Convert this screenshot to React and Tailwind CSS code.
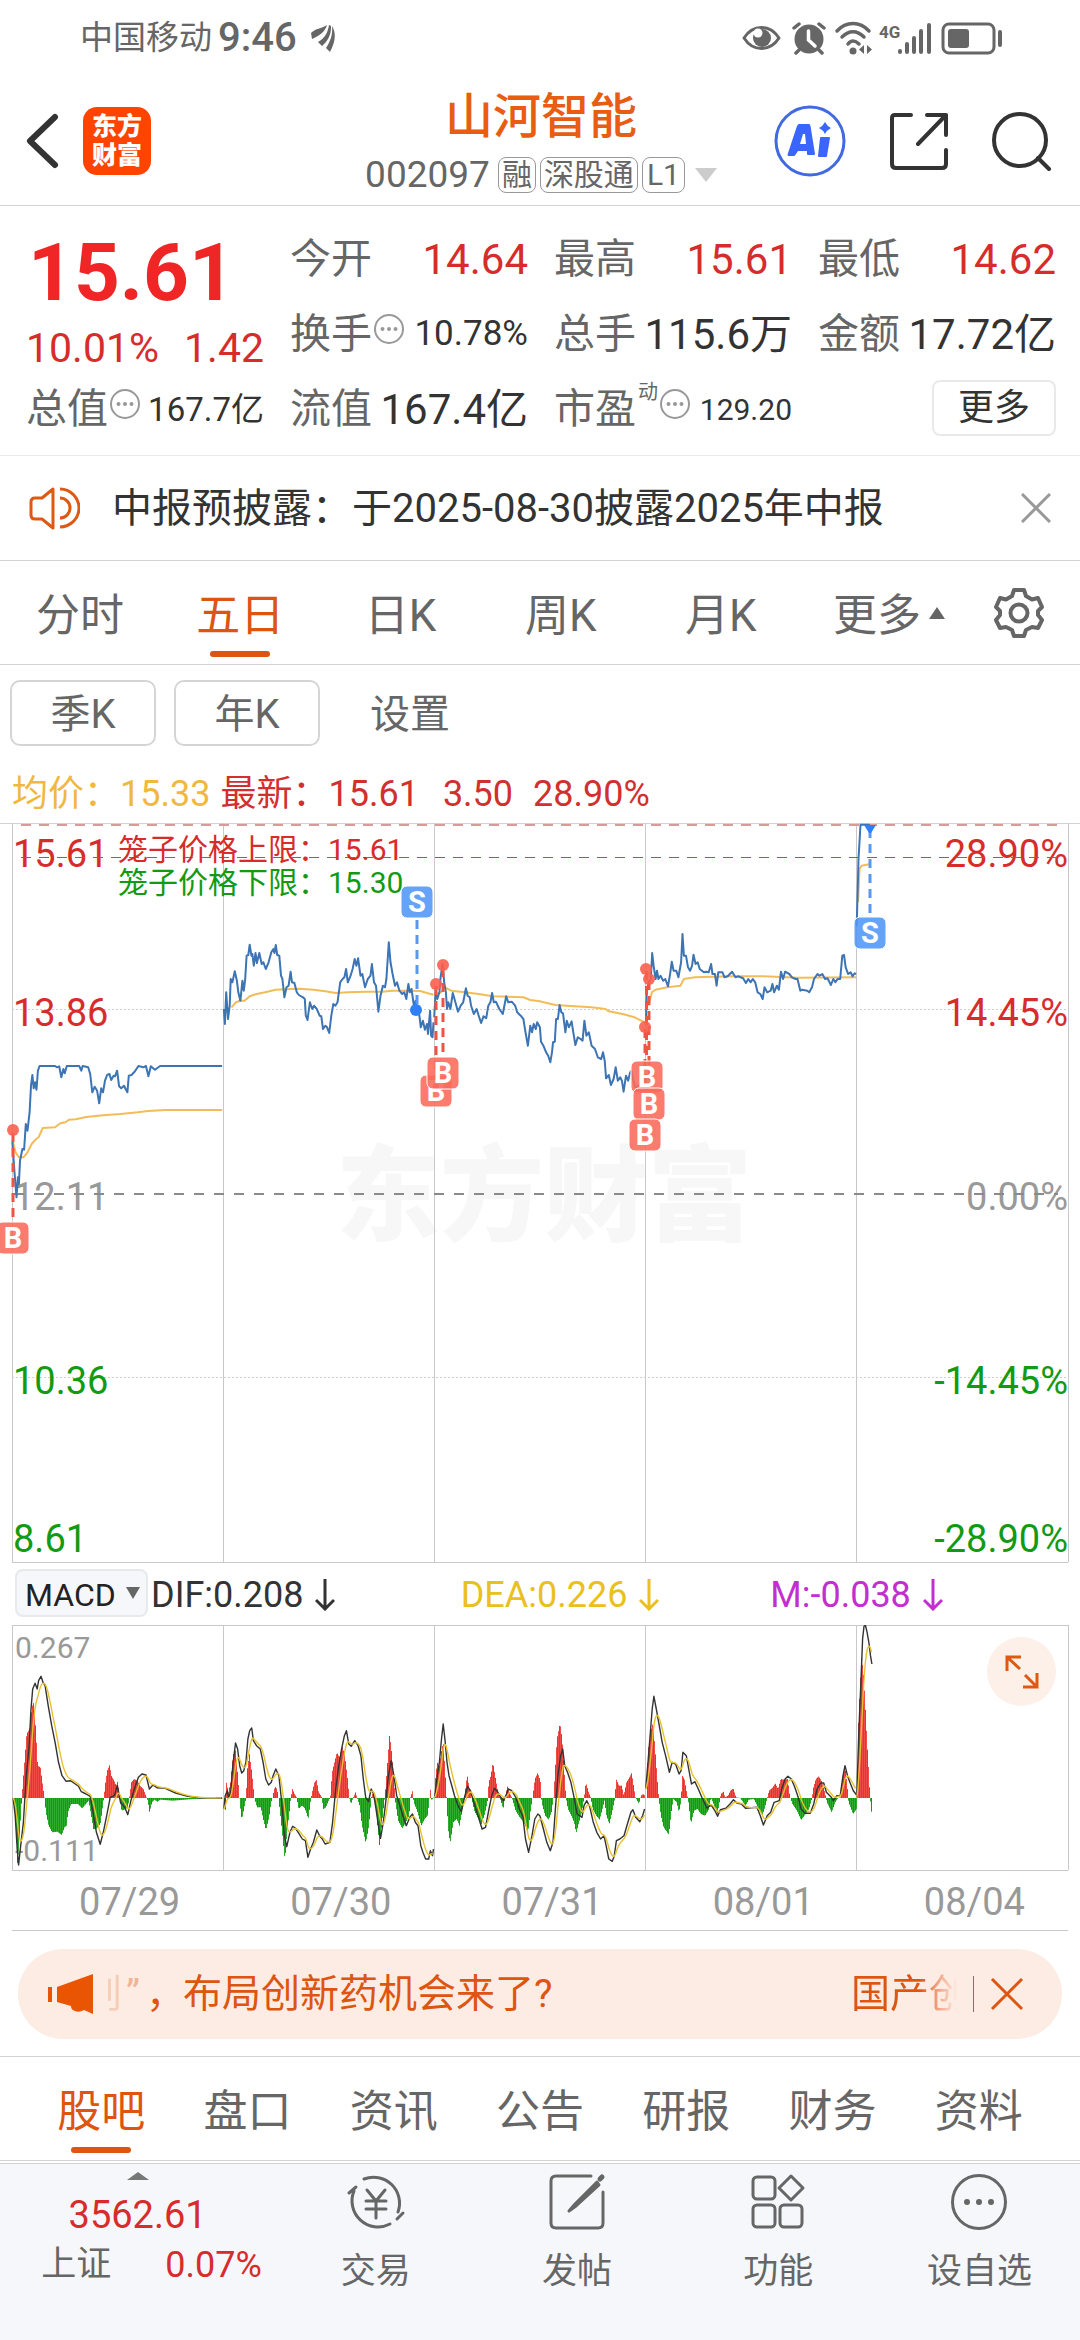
import React from "react";

/* Chart samples: x is in 1/2.904 px, y in 1/3 px, measured from the panel's own origin. */
const SX = 2.904;
const SY = 3;

const parse = (s) => s.trim().split(/\s+/).map((p) => p.split(",").map(Number));

const priceDays = [
  "38,960 36,972 42,1060 48,1135 52,1075 55,1095 58,1025 65,990 70,992 75,915 80,935 86,880 90,800 94,768 98,808 102,790 106,812 110,755 115,741 160,741 165,745 172,742 178,775 184,750 188,763 194,741 230,741 236,755 240,741 256,745 262,765 268,820 275,803 282,815 288,853 294,808 299,820 305,785 311,768 318,765 323,783 330,770 334,772 340,755 346,802 352,808 360,800 366,812 370,820 374,770 382,768 392,757 402,741 416,745 424,741 431,772 438,742 450,752 465,741 645,741",
  "650,570 653,615 657,520 662,600 667,560 670,480 675,490 682,457 688,485 692,520 698,545 704,485 708,515 712,480 716,410 721,408 725,377 730,410 733,405 737,440 742,402 746,432 753,402 760,435 765,430 772,450 780,430 788,400 794,390 797,402 801,378 805,408 811,410 816,470 820,480 826,535 832,505 838,500 844,458 848,490 855,492 862,520 868,528 880,535 885,540 888,590 893,603 900,550 907,570 912,560 920,570 928,590 933,592 938,630 945,620 950,625 956,642 962,590 968,555 974,560 980,550 988,490 995,480 1000,475 1005,450 1010,490 1018,470 1024,450 1030,420 1035,440 1040,418 1047,470 1052,465 1060,505 1068,480 1076,470 1080,435 1086,490 1092,500 1099,578 1105,530 1112,500 1118,505 1122,480 1129,370 1134,430 1140,465 1147,500 1153,490 1160,515 1168,525 1174,520 1180,540 1186,495 1190,520 1195,510 1202,560 1207,545 1211,572 1218,590 1222,625 1228,605 1234,632 1240,615 1243,645 1249,575 1252,650 1256,655 1259,610",
  "1261,595 1265,520 1270,540 1276,520 1279,480 1285,435 1290,490 1295,520 1298,570 1302,550 1308,570 1315,522 1320,540 1330,578 1338,560 1345,550 1353,508 1358,530 1364,535 1368,560 1376,585 1384,570 1390,590 1397,612 1404,592 1412,598 1418,560 1424,550 1429,522 1434,550 1440,548 1450,570 1460,585 1470,532 1476,550 1486,548 1496,560 1502,580 1512,590 1520,600 1526,640 1533,680 1540,620 1545,640 1550,615 1556,630 1560,610 1568,625 1571,668 1578,680 1586,700 1592,710 1598,730 1603,700 1606,670 1611,668 1615,600 1620,600 1625,558 1630,580 1635,583 1642,640 1646,605 1652,625 1660,607 1665,640 1671,678 1678,655 1686,660 1692,665 1697,605 1703,650 1710,640 1718,680 1728,690 1736,715 1746,720 1751,700 1756,725 1760,778 1768,768 1774,798 1782,780 1788,745 1794,785 1801,775 1806,785 1811,818 1818,770 1824,785 1830,760 1834,755 1838,780 1845,805 1856,800 1868,780",
  "1876,600 1878,520 1884,490 1890,480 1894,402 1898,440 1904,480 1908,455 1912,480 1918,470 1926,485 1932,480 1940,502 1946,465 1951,428 1956,455 1964,455 1970,475 1978,430 1982,345 1986,410 1992,410 1998,445 2004,455 2010,440 2014,407 2020,435 2026,430 2032,450 2044,460 2050,458 2058,460 2065,435 2069,465 2076,465 2081,500 2086,460 2098,460 2104,475 2113,472 2126,458 2136,475 2143,472 2158,478 2166,492 2173,480 2180,490 2186,480 2193,490 2200,520 2208,525 2215,540 2220,505 2228,520 2238,515 2243,495 2248,520 2256,500 2262,512 2268,458 2274,480 2280,458 2292,465 2300,475 2310,480 2316,480 2324,515 2330,512 2344,515 2350,520 2358,505 2364,480 2374,465 2380,470 2388,465 2396,480 2403,478 2413,498 2420,480 2426,490 2432,480 2440,480 2446,410 2451,408 2456,445 2463,465 2470,460 2476,472 2482,463 2486,465",
  "2488,322 2493,120 2499,17 2526,17",
];

const avgDays = [
  "38,970 45,1000 55,1015 68,1015 80,1000 92,975 105,960 112,955 124,927 160,925 175,913 190,910 200,902 220,901 250,894 300,889 350,885 400,880 430,876 480,873 645,873",
  "672,565 685,550 697,545 710,545 725,532 745,525 770,520 800,512 830,511 870,509 910,512 945,517 975,522 1010,520 1060,518 1110,518 1140,515 1190,515 1220,516 1240,522 1259,527",
  "1261,527 1280,520 1292,505 1310,515 1350,520 1390,525 1430,532 1520,535 1540,543 1568,547 1588,552 1613,558 1668,562 1718,565 1758,570 1768,577 1808,585 1843,595 1872,610",
  "1883,560 1893,520 1903,512 1938,505 1976,500 1986,480 2018,475 2128,472 2218,472 2318,476 2486,475",
  "2492,250 2496,150 2502,140 2523,136 2526,132",
];

const barDays = [
  "38,747 44,830 50,955 55,870 60,780 62,747 66,690 72,610 76,555 84,540 90,490 95,455 100,500 104,570 108,650 116,655 124,720 128,747 132,790 140,830 150,850 165,848 178,858 186,835 192,830 196,790 205,765 225,765 237,778 248,765 256,755 262,790 270,840 278,840 290,825 296,780 300,747 305,700 310,665 317,648 322,680 330,695 336,710 341,695 345,747 352,785 364,780 370,775 375,740 380,700 388,690 398,695 405,710 415,720 424,745 428,755 433,790 440,760 447,752 456,758 464,752 500,755 560,750 645,748",
  "650,747 653,795 656,700 662,730 668,700 675,620 682,600 688,665 694,747 698,790 701,812 708,775 713,747 717,660 723,615 730,670 737,745 745,775 756,775 763,810 771,843 780,805 786,760 790,747 795,720 800,712 806,735 812,790 818,850 826,935 832,850 838,800 843,747 848,720 854,735 860,745 866,780 875,770 882,775 888,790 894,810 900,760 905,730 912,700 918,693 924,730 932,742 938,780 945,775 953,755 958,745 963,670 970,640 977,610 984,625 992,590 1000,620 1008,690 1013,747 1018,765 1024,747 1031,730 1036,747 1043,770 1050,830 1061,882 1070,830 1077,745 1082,730 1088,760 1095,830 1101,892 1107,830 1112,780 1117,735 1124,640 1130,556 1137,620 1143,700 1147,760 1155,815 1167,838 1177,820 1187,800 1190,747 1197,725 1200,760 1210,785 1222,830 1232,810 1240,800 1245,760 1248,715 1252,755 1258,745",
  "1262,700 1268,640 1275,650 1280,610 1286,578 1292,680 1296,760 1300,840 1306,882 1315,820 1325,810 1333,830 1340,790 1348,745 1352,700 1356,682 1362,720 1368,747 1376,785 1388,810 1397,825 1405,800 1414,760 1418,700 1424,680 1430,640 1438,690 1445,730 1450,745 1460,780 1466,740 1472,712 1480,735 1485,745 1496,785 1508,805 1520,820 1532,850 1540,780 1546,740 1552,690 1560,672 1568,695 1570,745 1574,770 1582,800 1592,812 1600,790 1606,745 1611,660 1616,570 1625,522 1631,570 1638,680 1642,745 1648,780 1658,800 1666,820 1672,852 1680,820 1688,790 1695,745 1700,700 1708,730 1714,745 1720,780 1730,800 1740,812 1748,780 1754,755 1760,800 1768,825 1776,790 1784,750 1788,690 1796,710 1804,710 1810,740 1818,700 1824,690 1833,672 1840,720 1844,745 1854,765 1860,740 1866,735 1872,740",
  "1876,700 1881,600 1888,550 1895,520 1901,600 1908,700 1912,750 1918,800 1926,835 1941,857 1948,790 1954,750 1964,760 1970,790 1976,760 1980,680 1986,690 1992,725 1998,760 2005,825 2014,785 2024,780 2034,795 2046,800 2058,780 2063,745 2071,765 2082,795 2088,760 2092,735 2100,728 2104,745 2113,740 2120,725 2128,718 2136,745 2148,747 2164,770 2173,752 2188,750 2202,780 2212,800 2220,775 2226,750 2232,725 2243,715 2250,703 2258,720 2266,690 2276,692 2286,690 2292,740 2300,765 2313,785 2325,813 2338,795 2348,780 2356,750 2361,715 2368,690 2376,682 2384,695 2394,730 2400,760 2414,790 2424,760 2432,747 2440,745 2444,690 2452,650 2458,700 2463,760 2476,795 2486,780",
  "2488,740 2492,500 2496,420 2500,325 2505,360 2510,440 2516,570 2521,660 2525,745 2528,770 2532,822",
];

const difDays = [
  "38,747 44,800 50,900 54,948 60,890 68,820 76,680 84,600 90,480 95,420 102,403 108,420 112,395 119,382 125,400 131,410 140,470 150,530 160,580 170,640 180,680 192,697 205,695 228,712 236,728 250,735 262,742 270,790 280,850 291,886 300,850 310,800 320,745 332,740 341,710 350,760 362,775 371,797 380,755 390,720 402,685 412,675 424,678 434,720 444,708 456,716 480,718 510,732 545,742 580,746 645,747",
  "650,780 654,740 660,725 664,745 670,730 676,650 684,582 690,600 696,650 702,672 708,665 714,640 720,570 725,545 731,537 736,575 745,590 756,600 764,640 772,690 780,708 788,700 793,680 801,660 810,680 818,760 826,860 833,893 842,850 850,832 858,838 866,850 878,870 887,875 894,925 902,900 910,880 920,843 928,860 936,870 944,885 958,880 966,820 975,720 984,650 992,600 1000,560 1006,545 1013,585 1020,592 1030,575 1040,590 1048,620 1055,690 1062,745 1070,758 1078,720 1085,735 1092,780 1099,830 1105,868 1113,820 1120,760 1128,680 1136,635 1144,680 1152,740 1160,765 1170,800 1180,830 1190,805 1198,795 1206,820 1214,830 1222,890 1228,910 1236,930 1245,930 1250,905 1256,920 1259,900",
  "1262,745 1270,680 1276,640 1282,570 1287,525 1292,570 1298,640 1304,680 1312,710 1320,740 1330,770 1340,788 1350,740 1358,712 1366,725 1376,760 1388,800 1400,840 1410,835 1420,780 1428,740 1436,718 1446,730 1454,745 1462,755 1470,738 1476,720 1486,725 1498,745 1508,780 1518,800 1526,870 1535,910 1545,860 1553,810 1562,795 1568,800 1578,840 1588,880 1598,905 1606,880 1613,780 1620,680 1628,620 1634,600 1640,650 1648,670 1658,700 1666,740 1676,795 1690,805 1696,770 1704,755 1713,775 1723,820 1733,850 1744,870 1754,860 1760,890 1768,930 1778,937 1784,920 1790,875 1800,870 1812,860 1822,825 1832,790 1838,782 1846,805 1858,818 1866,800 1872,780",
  "1875,720 1881,650 1888,560 1894,480 1899,442 1906,480 1913,520 1923,580 1933,620 1944,670 1952,640 1962,645 1972,675 1978,665 1983,610 1993,620 2000,660 2008,705 2018,698 2028,720 2038,745 2053,778 2065,768 2076,785 2084,802 2092,782 2108,778 2120,765 2130,752 2140,762 2153,765 2165,778 2198,775 2208,800 2217,828 2228,800 2238,790 2248,760 2263,755 2270,720 2280,690 2288,682 2298,690 2308,715 2318,745 2326,780 2338,793 2353,793 2363,765 2373,720 2383,702 2392,702 2400,730 2414,745 2420,755 2430,740 2440,740 2448,680 2454,650 2461,680 2468,700 2478,725 2487,737",
  "2488,747 2494,550 2500,400 2505,270 2509,232 2513,228 2518,250 2524,285 2528,320 2532,345",
];

/* value of a piecewise-linear series at x */
function at(pts, x) {
  for (let i = 1; i < pts.length; i++) {
    if (x <= pts[i][0]) {
      const [x0, y0] = pts[i - 1];
      const [x1, y1] = pts[i];
      return y0 + ((y1 - y0) * (x - x0)) / (x1 - x0 || 1);
    }
  }
  return pts[pts.length - 1][1];
}

const toPoints = (pts, top) =>
  pts.map(([x, y]) => `${(x / SX).toFixed(1)},${(y / SY - top).toFixed(1)}`).join(" ");

const MINUTE = 2.54;
function ema(pts) {
  const out = [];
  let v = pts[0][1];
  for (let x = pts[0][0]; x <= pts[pts.length - 1][0]; x += MINUTE) {
    v += 0.22 * (at(pts, x) - v);
    out.push([x, v]);
  }
  return out;
}

function bars(pts) {
  const out = [];
  const first = Math.ceil(pts[0][0] / SX);
  const last = Math.floor(pts[pts.length - 1][0] / SX);
  for (let px = first; px <= last; px++) out.push([px, at(pts, px * SX) / SY - 76]);
  return out;
}

const GRID_X = [12, 223, 434, 645, 856, 1068];

function Marker({ x, y, kind }) {
  return (
    <g>
      <rect x={x - 16} y={y - 16} width="32" height="32" rx="6" fill={kind === "B" ? "#fa6a5a" : "#4f96f7"} fillOpacity="0.88" stroke="#fff" strokeWidth="1" />
      <text x={x} y={y + 10} fontSize="29" fontWeight="700" textAnchor="middle" fill="#fff">{kind}</text>
    </g>
  );
}

function PriceChart() {
  const left = [["15.61", 44, "#d72c2c"], ["13.86", 203, "#d72c2c"], ["12.11", 387, "#999"], ["10.36", 571, "#139a13"], ["8.61", 729, "#139a13"]];
  const right = [["28.90%", 44, "#d72c2c"], ["14.45%", 203, "#d72c2c"], ["0.00%", 387, "#999"], ["-14.45%", 571, "#139a13"], ["-28.90%", 729, "#139a13"]];
  return (
    <svg viewBox="0 0 1080 740" className="block h-auto w-full" role="img" aria-label="五日走势图">
      <text x="336" y="410" fontSize="104" fontWeight="900" fill="#f7f7f7">东方财富</text>
      <path d="M0 .5H1080" stroke="#d3d3d3" />
      <g stroke="#c9c9c9" fill="none">
        {GRID_X.map((x) => <path key={x} d={`M${x + 0.5} 0V739`} />)}
        <path d="M12 739.5H1068" />
      </g>
      <path d="M12 186.5H1068M12 554.5H1068" stroke="#cfcfcf" strokeDasharray="2 2" />
      <path d="M21 2H1058" stroke="#d99a9a" strokeWidth="2" strokeDasharray="10 8" />
      {left.map(([t, y, c]) => <text key={t} x="13" y={y} fontSize="38" fill={c}>{t}</text>)}
      {right.map(([t, y, c]) => <text key={t} x="1068" y={y} fontSize="38" fill={c} textAnchor="end">{t}</text>)}
      <path d="M21 34.5H1058" stroke="#2f9a2f" strokeDasharray="10 8" />
      <path d="M14 371H1058" stroke="#8a8a8a" strokeWidth="2" strokeDasharray="10 10" />
      <text x="118" y="37" fontSize="30" fill="#d72c2c">笼子价格上限：15.61</text>
      <text x="118" y="70" fontSize="30" fill="#139a13">笼子价格下限：15.30</text>
      <g fill="none" strokeLinejoin="round">
        {avgDays.map((d, i) => <polyline key={i} points={toPoints(parse(d), 4)} stroke="#f2bd58" strokeWidth="2" />)}
        {priceDays.map((d, i) => <polyline key={i} points={toPoints(parse(d), 4)} stroke="#3c74b4" strokeWidth="2" />)}
      </g>
      <g strokeWidth="3" strokeDasharray="9 6" fill="none">
        <path d="M13 310V398M436 163V250M443 145V234M646.500 148V238M649 158V264M645 206V298" stroke="#ee5443" />
        <path d="M417 97V184M870 6V94" stroke="#5a97ee" />
      </g>
      <g fill="#f8604f" fillOpacity="0.9">
        <circle cx="13" cy="307" r="6" /><circle cx="436" cy="161" r="6" /><circle cx="443" cy="142" r="6" />
        <circle cx="646" cy="146" r="6" /><circle cx="649" cy="156" r="6" /><circle cx="645" cy="204" r="6" />
      </g>
      <circle cx="416" cy="187" r="6" fill="#2f80f7" />
      <path d="M864 2H876L871 10H869Z" fill="#2f80f7" />
      <Marker x={13} y={415} kind="B" />
      <Marker x={436} y={268} kind="B" />
      <Marker x={443} y={250} kind="B" />
      <Marker x={647} y={254} kind="B" />
      <Marker x={649} y={281} kind="B" />
      <Marker x={645} y={312} kind="B" />
      <Marker x={417} y={79} kind="S" />
      <Marker x={870} y={110} kind="S" />
    </svg>
  );
}

function MacdChart() {
  const zero = 747 / SY - 76;
  return (
    <svg viewBox="0 0 1080 246" className="block h-auto w-full" role="img" aria-label="MACD 指标图">
      <g stroke="#c9c9c9" fill="none">
        <path d="M12 .5H1068M12 245.500H1068" />
        {GRID_X.map((x) => <path key={x} d={`M${x + 0.5} 0V245`} />)}
      </g>
      {barDays.map((d, i) =>
        bars(parse(d)).map(([x, y]) => (
          <rect key={`${i}-${x}`} x={x} y={Math.min(y, zero)} width="1" height={Math.abs(y - zero)} fill={y < zero ? (x % 2 ? "#ee2f2f" : "#ef4c48") : x % 2 ? "#0f9c0f" : "#2eac2e"} />
        ))
      )}
      <text x="15" y="33" fontSize="30" fill="#999">0.267</text>
      <text x="15" y="236" fontSize="30" fill="#999">-0.111</text>
      <g fill="none" strokeLinejoin="round">
        {difDays.map((d, i) => <polyline key={i} points={toPoints(parse(d), 76)} stroke="#333" strokeWidth="1.400" />)}
        {difDays.map((d, i) => <polyline key={i} points={toPoints(ema(parse(d)), 76)} stroke="#e8c22e" strokeWidth="1.400" />)}
      </g>
    </svg>
  );
}

function Dots({ className = "size-[30px]" }) {
  return (
    <svg viewBox="0 0 30 30" className={className} fill="none" stroke="#999" strokeWidth="2" aria-hidden="true">
      <circle cx="15" cy="15" r="14" />
      <g fill="#999" stroke="none"><circle cx="8.500" cy="15" r="2" /><circle cx="15" cy="15" r="2" /><circle cx="21.500" cy="15" r="2" /></g>
    </svg>
  );
}

function StatusBar() {
  return (
    <div className="flex h-[75px] items-center justify-between pl-20 pr-[77px] text-[#666]">
      <div className="flex items-center">
        <span className="text-[33px]">中国移动</span>
        <span className="ml-1.5 text-[40px] font-medium">9:46</span>
        <svg viewBox="0 0 24 28" className="ml-3.5 h-7 w-6" fill="#666" aria-hidden="true">
          <path d="M0 9C5 4 10 5 16 1C14 8 8 12 1 15ZM7 18C14 14 17 8 18 1C20 2 20 1 20 4C20 10 17 17 11 22ZM15 24C19 18 22 11 21 2C25 8 25 17 19 28Z" />
        </svg>
      </div>
      <svg viewBox="0 0 262 34" className="h-[34px] w-[262px]" fill="none" stroke="#666" aria-hidden="true">
        <path d="M3 17C12 3 29 3 38 17C29 31 12 31 3 17Z" strokeWidth="3" strokeLinejoin="round" />
        <circle cx="21" cy="17" r="9" fill="#666" stroke="none" />
        <circle cx="17" cy="12" r="4.500" fill="#fff" stroke="none" />
        <circle cx="68" cy="18" r="14.500" fill="#666" stroke="none" />
        <path d="M53 7L58 3M83 7L78 3M58 29L55 32M78 29L81 32" strokeWidth="3.500" strokeLinecap="round" />
        <path d="M67.500 10V19L74 25" stroke="#fff" strokeWidth="3.500" strokeLinecap="round" />
        <path d="M96 10C105 0 119 0 128 10M101 16C108 9 116 9 123 16M107 23C110 19 114 19 118 23" strokeWidth="3.500" strokeLinecap="round" />
        <circle cx="112" cy="30" r="3.500" fill="#666" stroke="none" />
        <path d="M123 24V33L118 28.500ZM126 24V33L131 28.500Z" fill="#666" stroke="none" />
        <text x="138" y="17" fontSize="17" fontWeight="700" fill="#666" stroke="none">4G</text>
        <path d="M159 30V31M166 23V31M173 17V31M180 10V31M188 4V31" strokeWidth="4" strokeLinecap="round" />
        <rect x="202" y="3" width="51" height="29" rx="6" strokeWidth="3" />
        <rect x="207" y="8" width="21" height="19" rx="3" fill="#666" stroke="none" />
        <path d="M259 11V24" strokeWidth="4" strokeLinecap="round" />
      </svg>
    </div>
  );
}

function Header() {
  return (
    <header className="grid grid-cols-[1fr_auto_1fr] items-center border-b border-[#d3d3d3] pb-3 pt-3.5 pl-[26px] pr-6">
      <div className="flex items-center gap-6">
        <button aria-label="返回">
          <svg viewBox="0 0 33 56" className="h-14 w-[33px]" fill="none" stroke="#333" strokeWidth="6" strokeLinecap="round" strokeLinejoin="round"><path d="M29 4L4 28L29 52" /></svg>
        </button>
        <div className="flex size-[68px] flex-col items-center justify-center rounded-[14px] bg-[#ff4400] text-[25px] font-black leading-[29px] text-white">
          <span>东方</span><span>财富</span>
        </div>
      </div>
      <div className="flex flex-col items-center gap-3">
        <h1 className="text-[48px] font-medium leading-[56px] text-[#e85d12]">山河智能</h1>
        <button className="flex items-center gap-1 text-[30px] leading-[34px] text-[#666]">
          <span className="mr-1 text-[37px]">002097</span>
          <span className="rounded-lg border border-[#999] px-[3px]">融</span>
          <span className="rounded-lg border border-[#999] px-[3px]">深股通</span>
          <span className="rounded-lg border border-[#999] px-1">L1</span>
          <svg viewBox="0 0 22 14" className="ml-1.5 h-3.5 w-[22px]" fill="#ccc" aria-hidden="true"><path d="M0 0H22L11 14Z" /></svg>
        </button>
      </div>
      <div className="flex items-center justify-end gap-11 pr-1">
        <button aria-label="AI 助手">
          <svg viewBox="0 0 72 72" className="size-[72px]" aria-hidden="true">
            <circle cx="36" cy="36" r="34" fill="none" stroke="#4169e1" strokeWidth="3" />
            <path d="M25 19H35Q36 19 36.500 21L41 49Q41 50 40 50H34Q33 50 33 49V46H24L22 49Q21 51 20 51H14Q13 50 14 48L23 21Q24 19 25 19ZM29 29L26 39H32L31 29Z" fill="#3a66ff" />
            <path d="M47 32H55Q56 32 56 33L53 51Q53 52 52 52H45Q44 52 44 51L46 33Q46 32 47 32Z" fill="#3a66ff" />
            <path d="M51 17Q53 21 57 23Q53 25 51 29Q49 25 45 23Q49 21 51 17Z" fill="#3a66ff" />
          </svg>
        </button>
        <button aria-label="分享">
          <svg viewBox="0 0 58 58" className="size-[58px]" fill="none" stroke="#333" strokeWidth="4" strokeLinecap="round" strokeLinejoin="round"><path d="M21 3H5Q2 3 2 6V52Q2 56 6 56H52Q56 56 56 52V38M37 3H56V23M56 3L28 32" /></svg>
        </button>
        <button aria-label="搜索">
          <svg viewBox="0 0 60 60" className="size-[60px]" fill="none" stroke="#333" strokeWidth="4" strokeLinecap="round"><circle cx="28" cy="29" r="26" /><path d="M46 47L57 58" /></svg>
        </button>
      </div>
    </header>
  );
}

function Stat({ label, value, tone = "text-[#333]", size = "text-[42px]", info, sup }) {
  return (
    <div className="flex h-[75px] items-center justify-between whitespace-nowrap">
      <dt className="flex items-center text-[41px] text-[#666]">
        {label}
        {sup && <sup className="-mt-4 ml-0.5 text-[20px]">{sup}</sup>}
        {info && <Dots className="ml-0.5 mb-3 size-[30px]" />}
      </dt>
      <dd className={`${tone} ${size}`}>{value}</dd>
    </div>
  );
}

function Quote() {
  const red = "text-[#d72c2c]";
  return (
    <section className="border-b border-[#e8e8e8] pb-2 pl-[26px] pr-6 pt-4">
      <dl className="grid grid-cols-4 gap-x-[26px]">
        <div className="row-span-2 flex flex-col text-[#d72c2c]">
          <span className="pl-0.5 text-[80px] font-bold leading-[102px] text-[#f02626]">15.61</span>
          <span className="flex justify-between text-[41px] leading-[48px]"><span>10.01%</span><span>1.42</span></span>
        </div>
        <Stat label="今开" value="14.64" tone={red} />
        <Stat label="最高" value="15.61" tone={red} />
        <Stat label="最低" value="14.62" tone={red} />
        <Stat label="换手" value="10.78%" size="text-[35px]" info />
        <Stat label="总手" value="115.6万" />
        <Stat label="金额" value="17.72亿" />
        <Stat label="总值" value="167.7亿" size="text-[33px]" info />
        <Stat label="流值" value="167.4亿" />
        <Stat label="市盈" value="129.20" size="text-[30px]" sup="动" info />
        <div className="flex items-center justify-end pb-1">
          <button className="rounded-lg border-2 border-[#e8eaea] px-6 py-1 text-[36px] leading-[44px] text-[#333]">更多</button>
        </div>
      </dl>
    </section>
  );
}

function Notice() {
  return (
    <section className="flex h-[105px] items-center border-b border-[#d3d3d3] pl-7 pr-[29px]">
      <svg viewBox="0 0 52 44" className="h-11 w-[52px]" fill="none" stroke="#dd5a14" strokeWidth="3" strokeLinejoin="round" aria-hidden="true">
        <path d="M25 3L14 12H7Q3 12 3 16V29Q3 33 7 33H14L25 42ZM32 3A19 19 0 0 1 32 41M32 12A10 10 0 0 1 32 32" />
      </svg>
      <p className="ml-8 flex-1 whitespace-nowrap pt-0.5 text-[40px] text-[#333]">中报预披露：于2025-08-30披露2025年中报</p>
      <button aria-label="关闭公告"><svg viewBox="0 0 30 30" className="size-[30px]" stroke="#999" strokeWidth="3"><path d="M1 1L29 29M29 1L1 29" /></svg></button>
    </section>
  );
}

function PeriodTabs() {
  return (
    <nav className="flex h-[104px] items-stretch border-b border-[#d3d3d3] text-[44px] text-[#666]">
      {["分时", "五日", "日K", "周K", "月K"].map((t) => (
        <button key={t} className={`relative flex-1 pt-1.5 ${t === "五日" ? "text-[#dd5510]" : ""}`}>
          {t}
          {t === "五日" && <span className="absolute bottom-[7px] left-1/2 h-1.5 w-[60px] -translate-x-1/2 rounded-full bg-[#dd5510]" />}
        </button>
      ))}
      <button className="flex items-center justify-center gap-2 pl-8 pr-12 pt-1.5">
        更多
        <svg viewBox="0 0 16 12" className="mb-1.5 h-3 w-4" fill="#666" aria-hidden="true"><path d="M8 0L16 12H0Z" /></svg>
      </button>
      <button aria-label="图表设置" className="pr-[35px]">
        <svg viewBox="0 0 52 52" className="size-[52px]" fill="none" stroke="#666" strokeWidth="4" strokeLinejoin="round">
          <path d="M21 3H31L33 9L39 12.500L45 11L49 20L45 24V28L49 33L45 41L39 40L33 43L31 49H21L19 43L13 40L7 41L3 33L7 28V24L3 20L7 11L13 12.500L19 9Z" />
          <circle cx="26" cy="26" r="8.500" />
        </svg>
      </button>
    </nav>
  );
}

function ChartLegend() {
  return (
    <>
      <div className="flex items-center gap-[18px] px-2.5 pt-[15px] text-[40px] leading-[58px] text-[#666]">
        <button className="w-[146px] rounded-[10px] border-2 border-[#d5d5d5] pt-1">季K</button>
        <button className="w-[146px] rounded-[10px] border-2 border-[#d5d5d5] pt-1">年K</button>
        <button className="ml-8 pt-1">设置</button>
      </div>
      <p className="flex whitespace-nowrap px-3 pt-5 text-[36px] leading-[57px] text-[#d22f2f]">
        <span className="mr-2.5 text-[#f0b840]">均价：15.33</span>
        <span className="mr-6">最新：15.61</span>
        <span className="mr-5">3.50</span>
        <span>28.90%</span>
      </p>
    </>
  );
}

function Down() {
  return <svg viewBox="0 0 20 32" className="h-8 w-5" fill="none" stroke="currentColor" strokeWidth="3" aria-hidden="true"><path d="M10 0V30M1 21L10 30L19 21" /></svg>;
}

function MacdRow() {
  return (
    <div className="flex h-[62px] items-center pl-[15px] text-[36px] text-[#333]">
      <div className="relative">
        <select aria-label="指标" defaultValue="MACD" className="h-12 w-[133px] appearance-none rounded-lg border-2 border-[#e7e9ec] bg-[#f6f7fa] pl-2 text-[32px] text-[#222]">
          <option>MACD</option>
        </select>
        <svg viewBox="0 0 14 12" className="pointer-events-none absolute right-2 top-5 h-3 w-3.5" fill="#666" aria-hidden="true"><path d="M0 0H14L7 12Z" /></svg>
      </div>
      <div className="ml-[3px] grid flex-1 grid-cols-3 pt-0.5">
        <span className="flex items-center gap-3">DIF:0.208<Down /></span>
        <span className="flex items-center gap-3 text-[#eac020]">DEA:0.226<Down /></span>
        <span className="flex items-center gap-3 text-[#c32fcf]">M:-0.038<Down /></span>
      </div>
    </div>
  );
}

function Banner() {
  return (
    <section className="mx-[18px] mb-[17px] mt-[18px] flex h-[90px] items-center rounded-full bg-[#fcece3] pl-[30px] pr-[38px] text-[39px] text-[#dd5510]">
      <svg viewBox="0 0 46 40" className="h-10 w-[46px]" fill="#ea5504" aria-hidden="true"><path d="M0 13H4V28H0ZM9 13L45 0V40L36 36Q31 39 27 37Q23 36 23 32L9 28Z" /></svg>
      <p className="ml-3 flex flex-1 justify-between overflow-hidden whitespace-nowrap">
        <span className="flex">
          <span className="w-4 overflow-hidden opacity-20 [direction:rtl]">创</span>
          <span className="w-6 pl-1 text-[#f0b497]">”</span>
          <span className="w-[37px]">，</span>
          <span>布局创新药机会来了?</span>
        </span>
        <span className="w-[106px] overflow-hidden bg-gradient-to-r from-[#dd5510] from-65% to-[#fcece3] bg-clip-text text-transparent">国产创新</span>
      </p>
      <span className="ml-4 mr-4 h-9 w-px bg-[#dd5510]" />
      <button aria-label="关闭"><svg viewBox="0 0 34 34" className="size-[34px]" stroke="#dd5510" strokeWidth="3"><path d="M2 2L32 32M32 2L2 32" /></svg></button>
    </section>
  );
}

function InfoTabs() {
  return (
    <nav className="grid h-[105px] grid-cols-7 border-y border-[#d3d3d3] px-7 text-[44px] text-[#666]">
      {["股吧", "盘口", "资讯", "公告", "研报", "财务", "资料"].map((t, i) => (
        <button key={t} className={`relative pt-1.5 ${i === 0 ? "text-[#dd5510]" : ""}`}>
          {t}
          {i === 0 && <span className="absolute bottom-[7px] left-1/2 h-1.5 w-[60px] -translate-x-1/2 rounded-full bg-[#dd5510]" />}
        </button>
      ))}
    </nav>
  );
}

const actions = [
  ["交易", <><path d="M18 7A26 26 0 0 1 52 40M44 52A26 26 0 0 1 8 19M3 21L10 15M57 41L51 47" /><path d="M21 18L30 29L39 18M30 29V46M20 29H40M20 37H40" /></>],
  ["发帖", <><path d="M44 4H9Q4 4 4 9V51Q4 56 9 56H51Q56 56 56 51V20" /><path d="M50 10L28 32L22 39L29 34L52 13Z" fill="#666" /><path d="M53 7L55 5" strokeWidth="5" /></>],
  ["功能", <><rect x="5" y="5" width="22" height="22" rx="4" /><rect x="5" y="33" width="22" height="22" rx="4" /><rect x="32" y="33" width="22" height="22" rx="4" /><path d="M43 4L55 16L43 28L31 16Z" /></>],
  ["设自选", <><circle cx="30" cy="30" r="26.500" /><g fill="#666" stroke="none"><circle cx="18" cy="30" r="3" /><circle cx="30" cy="30" r="3" /><circle cx="42" cy="30" r="3" /></g></>],
];

function BottomBar() {
  return (
    <footer className="mt-0.5 grid grow grid-cols-[275fr_201fr_201fr_201fr_201fr] content-start border-t border-[#d3d3d3] bg-[#f6f7fa] text-[35px] text-[#666]">
      <button className="flex flex-col items-center pt-2">
        <svg viewBox="0 0 22 8" className="h-2 w-[22px]" fill="#777" aria-hidden="true"><path d="M11 0L22 8H0Z" /></svg>
        <span className="mt-2.5 text-[38px] leading-[50px] text-[#d72c2c]">3562.61</span>
        <span className="flex items-center gap-[54px] pl-7 leading-[50px]"><span>上证</span><span className="text-[36px] text-[#d72c2c]">0.07%</span></span>
      </button>
      {actions.map(([label, icon]) => (
        <button key={label} className="flex flex-col items-center pt-2">
          <svg viewBox="0 0 60 60" className="size-[60px]" fill="none" stroke="#666" strokeWidth="3" strokeLinecap="round" strokeLinejoin="round" aria-hidden="true">{icon}</svg>
          <span className="mt-4 leading-[48px]">{label}</span>
        </button>
      ))}
    </footer>
  );
}

export default function App() {
  return (
    <div className="flex min-h-screen flex-col overflow-hidden bg-white font-[Roboto,'Noto_Sans_CJK_SC',sans-serif]">
      <StatusBar />
      <Header />
      <Quote />
      <Notice />
      <PeriodTabs />
      <ChartLegend />
      <PriceChart />
      <MacdRow />
      <div className="relative">
        <MacdChart />
        <button aria-label="全屏" className="absolute right-6 top-3 flex size-[69px] items-center justify-center rounded-full bg-[#fdf0e9]">
          <svg viewBox="0 0 34 34" className="size-[34px]" fill="none" stroke="#dd5a14" strokeWidth="3"><path d="M16 2H2V16M2 2L15 14M18 32H32V18M32 32L20 20" /></svg>
        </button>
      </div>
      <div className="mx-3 grid grid-cols-5 border-b border-[#c9c9c9] pt-1 text-center text-[38px] leading-[55px] text-[#999]">
        {["07/29", "07/30", "07/31", "08/01", "08/04"].map((d) => <span key={d} className="pl-6">{d}</span>)}
      </div>
      <Banner />
      <InfoTabs />
      <BottomBar />
    </div>
  );
}
